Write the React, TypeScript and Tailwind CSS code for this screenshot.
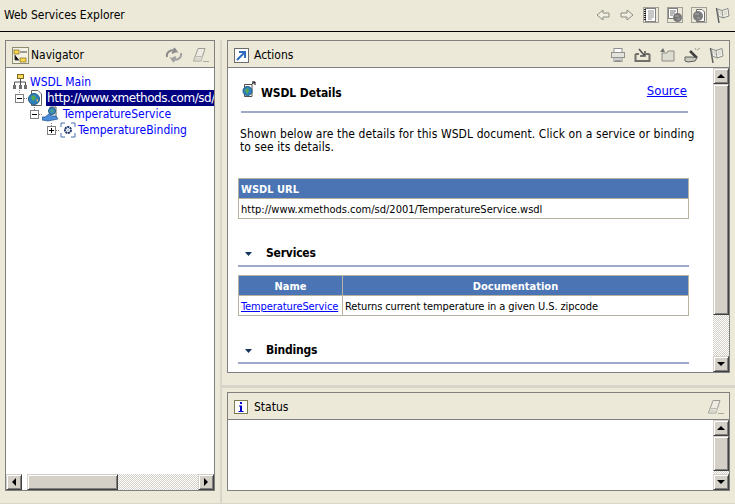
import React from 'react';

const font = "font-['DejaVu_Sans_Condensed','Liberation_Sans',sans-serif]";

function Arrow({ dir }: { dir: 'up' | 'down' | 'left' | 'right' }) {
  const pts = {
    up: '4,10 12,10 8,6',
    down: '4,6 12,6 8,10',
    left: '10,4 10,12 6,8',
    right: '6,4 6,12 10,8',
  }[dir];
  return (
    <svg width="14" height="14" viewBox="1 1 14 14">
      <polygon points={pts} fill="#000" />
    </svg>
  );
}

function ScrollButton({ dir }: { dir: 'up' | 'down' | 'left' | 'right' }) {
  return (
    <div className="w-4 h-4 shrink-0 flex items-center justify-center bg-[#d4d0c8] border border-t-[#d4d0c8] border-l-[#d4d0c8] border-r-[#404040] border-b-[#404040] shadow-[inset_1px_1px_0_#fff,inset_-1px_-1px_0_#808080]">
      <Arrow dir={dir} />
    </div>
  );
}

function Thumb({ className = '' }: { className?: string }) {
  return (
    <div className={`bg-[#d4d0c8] border border-t-[#d4d0c8] border-l-[#d4d0c8] border-r-[#404040] border-b-[#404040] shadow-[inset_1px_1px_0_#fff,inset_-1px_-1px_0_#808080] ${className}`} />
  );
}

const checker = 'bg-[repeating-conic-gradient(#d4d0c8_0_25%,#ffffff_0_50%)] bg-[length:2px_2px]';

function VScroll({ thumb }: { thumb: string }) {
  return (
    <div className="w-4 shrink-0 flex flex-col">
      <ScrollButton dir="up" />
      <Thumb className={`w-4 shrink-0 ${thumb}`} />
      <div className={`flex-1 ${checker}`} />
      <ScrollButton dir="down" />
    </div>
  );
}

function Eraser() {
  return (
    <svg width="18" height="16" viewBox="0 0 18 16">
      <path d="M7 1.5 H14 L10 14 H2.5 Z" fill="#eeece2" stroke="#9c9c94" />
      <path d="M4 9.5 H12" stroke="#bcbcb4" />
      <path d="M4 10.5 H11.5 L10 13.5 H3.5 Z" fill="#d8d8cc" />
      <path d="M12 14.5 H18" stroke="#a8a8a0" />
    </svg>
  );
}

function Refresh() {
  return (
    <svg width="18" height="16" viewBox="0 0 18 16" fill="none">
      <path d="M2 10 C1 5 6 2 11 4 L9 1 M11 4 L7 6" stroke="#8c8c8c" strokeWidth="2" />
      <path d="M16 6 C17 11 12 14 7 12 L9 15 M7 12 L11 10" stroke="#a0a0a0" strokeWidth="2" />
    </svg>
  );
}

function Flag() {
  return (
    <svg width="15" height="17" viewBox="0 0 15 17">
      <path d="M1.5 1 L4 16" stroke="#606060" strokeWidth="1.5" />
      <path d="M2.5 2 L7 3.5 L13 1.5 L14 9 L8 11 L3.5 9 Z" fill="#f0f0e8" stroke="#8c8c8c" />
      <path d="M7 3.5 L8 11" stroke="#909088" />
      <path d="M4 5H6M9 5H12M5 7H7M9 7H12" stroke="#c8c8bc" />
    </svg>
  );
}

function ToolDoc() {
  return (
    <svg width="16" height="16" viewBox="0 0 16 16">
      <rect x="0.5" y="0.5" width="15" height="15" fill="#ece9d8" stroke="#a0a098" />
      <rect x="2.5" y="1.5" width="10" height="13" fill="#fff" stroke="#808080" />
      <path d="M5 4H11M5 6H11M5 8H11M5 10H11M5 12H9" stroke="#909090" />
      <path d="M2 2V14" stroke="#202020" strokeDasharray="1 1" strokeWidth="2" />
    </svg>
  );
}

function ToolDocGlobe() {
  return (
    <svg width="16" height="16" viewBox="0 0 16 16">
      <rect x="0.5" y="0.5" width="15" height="15" fill="#ece9d8" stroke="#a0a098" />
      <rect x="1.5" y="1.5" width="9" height="10" fill="#fff" stroke="#808080" />
      <path d="M3 4H9M3 6H8M3 8H6" stroke="#707070" />
      <circle cx="10.5" cy="10.5" r="4.5" fill="#787878" />
      <path d="M8 9H12M10 12H13" stroke="#a8a8a8" />
    </svg>
  );
}

function ToolGlobeDoc() {
  return (
    <svg width="16" height="16" viewBox="0 0 16 16">
      <rect x="0.5" y="0.5" width="15" height="15" fill="#ece9d8" stroke="#a0a098" />
      <path d="M5.5 2.5 H11 L13.5 5 V14.5 H5.5 Z" fill="#fff" stroke="#707070" />
      <circle cx="7" cy="9" r="5" fill="#7c7c7c" />
      <path d="M4 7H8M6 11H9" stroke="#a8a8a8" />
    </svg>
  );
}

function WsdlIcon() {
  return (
    <svg width="15" height="16" viewBox="0 0 15 16" className="shrink-0">
      <path d="M3.5 0.5 H10 L13.5 4 V15.5 H3.5 Z" fill="#fff" stroke="#606060" />
      <circle cx="6" cy="9" r="5.5" fill="#2f82c0" stroke="#205c80" />
      <path d="M3 7 L6 5 L8 8 L5 11 Z" fill="#58a848" />
      <path d="M8 10 L10 9 L10 12 Z" fill="#e0b040" />
    </svg>
  );
}

function Expander({ open, stem = 4 }: { open: boolean; stem?: number }) {
  return (
    <svg width="9" height="9" viewBox="0 0 9 9" className="shrink-0 overflow-visible">
      <path d={`M4.5 ${-stem} V0 M9 4.5 H13`} stroke="#808080" strokeDasharray="1 1" />
      <rect x="0.5" y="0.5" width="8" height="8" fill="#fff" stroke="#808080" />
      <path d="M2 4.5H7" stroke="#000" />
      {!open && <path d="M4.5 2V7" stroke="#000" />}
    </svg>
  );
}

function TreeRow({ indent, children }: { indent: string; children: React.ReactNode }) {
  return <div className={`h-4 flex items-center ${indent}`}>{children}</div>;
}

function Tree() {
  return (
    <div className="pt-[6px] text-[12px] leading-4 text-[#0000ff] whitespace-nowrap">
      <TreeRow indent="pl-[6px]">
        <svg width="16" height="16" viewBox="0 0 16 16" className="shrink-0">
          <rect x="5.5" y="0.5" width="6" height="4" fill="#f8dc60" stroke="#806820" />
          <path d="M8.5 5V8M2.5 8H13.5M2.5 8V11M8.5 8V11M13.5 8V11" stroke="#505050" />
          <rect x="1" y="11" width="3" height="4" fill="#707070" />
          <rect x="7" y="11" width="3" height="4" fill="#707070" />
          <rect x="12" y="11" width="3" height="4" fill="#707070" />
        </svg>
        <span className="ml-[2px]">WSDL Main</span>
      </TreeRow>
      <TreeRow indent="pl-[9px]">
        <Expander open />
        <span className="ml-[4px]">
          <WsdlIcon />
        </span>
        <span className="ml-[3px] min-w-0 flex-1 bg-[#000080] text-white h-4 overflow-hidden pl-px font-['DejaVu_Sans',sans-serif] tracking-[-0.45px]">
          http://www.xmethods.com/sd/2001/TemperatureService.wsdl
        </span>
      </TreeRow>
      <TreeRow indent="pl-[24px]">
        <Expander open stem={3} />
        <svg width="18" height="16" viewBox="0 0 18 16" className="ml-[3px] shrink-0">
          <path d="M8 1 H14 V12 H8 Z" fill="#fff" stroke="#606060" />
          <circle cx="10" cy="5" r="3.5" fill="#3c8cc0" stroke="#205c80" />
          <path d="M9 4 L11 4 L10 7 Z" fill="#58a848" />
          <path d="M0 11 H3 L7 8 L10 10 L14 10 L16 13 L6 15 L0 14 Z" fill="#4c8cd8" stroke="#20508c" strokeWidth="0.7" />
        </svg>
        <span className="ml-[3px]">TemperatureService</span>
      </TreeRow>
      <TreeRow indent="pl-[41px]">
        <Expander open={false} stem={3} />
        <svg width="16" height="16" viewBox="0 0 16 16" className="ml-[4px] shrink-0" fill="none">
          <path d="M1 5V1H5M11 1H15V5M15 11V15H11M5 15H1V11" stroke="#4470b0" />
          <circle cx="8" cy="8" r="3" stroke="#20386c" strokeWidth="2" strokeDasharray="2 0.6" />
          <circle cx="8" cy="8" r="1" fill="#b0c0e0" />
        </svg>
        <span className="ml-[2px]">TemperatureBinding</span>
      </TreeRow>
    </div>
  );
}

function PanelHeader({ icon, title, tools }: { icon: React.ReactNode; title: string; tools?: React.ReactNode }) {
  return (
    <div className="h-[27px] shrink-0 flex items-center pl-[6px] pr-[5px] pt-[2px] border-b border-[#808080]">
      {icon}
      <span className="text-[12px] text-black">{title}</span>
      <div className="ml-auto flex items-center">{tools}</div>
    </div>
  );
}

function SectionHead({ title }: { title: string }) {
  return (
    <div className="-ml-[2px] w-[451px]">
      <div className="h-[19px] flex items-center pl-[6px]">
        <svg width="9" height="5" viewBox="0 0 9 5" className="shrink-0 mt-[3px]">
          <polygon points="1,0 8,0 4.5,4" fill="#14335c" />
        </svg>
        <span className="ml-[13px] mt-[2px] text-[12px] font-bold tracking-[-0.2px] text-black">{title}</span>
      </div>
      <div className="mt-[3px] h-0.5 bg-[#9fa8c9]" />
    </div>
  );
}

const cellLine = 'border-[#b8b2a0]';

export default function App() {
  return (
    <div className={`w-[735px] h-[504px] bg-[#ece9d8] flex flex-col overflow-hidden ${font}`}>
      <div className="h-[32px] shrink-0 flex items-center border-b border-black pl-1 pr-[5px] pb-[1px]">
        <span className="text-[12px] text-black">Web Services Explorer</span>
        <div className="ml-auto flex items-center gap-2">
          <svg width="14" height="12" viewBox="0 0 14 12" className="mr-[2px]">
            <path d="M1 6 L7 1 V4 H13 V8 H7 V11 Z" fill="#f0eee0" stroke="#8c8c84" />
          </svg>
          <svg width="14" height="12" viewBox="0 0 14 12" className="mr-[1px]">
            <path d="M13 6 L7 1 V4 H1 V8 H7 V11 Z" fill="#f0eee0" stroke="#8c8c84" />
          </svg>
          <ToolDoc />
          <ToolDocGlobe />
          <ToolGlobeDoc />
          <Flag />
        </div>
      </div>

      <div className="flex-1 min-h-0 flex pt-2 pb-[12px] pl-[5px] pr-[5px]">
        <div className="w-[210px] shrink-0 flex flex-col border border-[#808080]">
          <PanelHeader
            icon={
              <svg width="17" height="17" viewBox="0 0 17 17" className="mr-[2px]">
                <rect x="0.5" y="0.5" width="16" height="16" fill="#f4f2e4" stroke="#8c8c70" />
                <rect x="2" y="3" width="5" height="4" fill="#f8d850" stroke="#806820" strokeWidth="0.7" />
                <rect x="8" y="11" width="6" height="4" fill="#f8d850" stroke="#806820" strokeWidth="0.7" />
                <path d="M8 5H15M3 8V13H7" stroke="#404040" />
              </svg>
            }
            title="Navigator"
            tools={
              <div className="flex items-center gap-2">
                <Refresh />
                <Eraser />
              </div>
            }
          />
          <div className="flex-1 min-h-0 bg-white flex flex-col">
            <div className="flex-1 min-h-0 overflow-hidden">
              <Tree />
            </div>
            <div className="h-4 flex shrink-0">
              <ScrollButton dir="left" />
              <Thumb className="w-[91px] h-4 ml-[5px]" />
              <div className={`flex-1 ${checker}`} />
              <ScrollButton dir="right" />
            </div>
          </div>
        </div>

        <div className="w-[12px] shrink-0 pl-[5px]">
          <div className="w-[2px] h-[calc(100%+12px)] bg-[#d8d5ca]" />
        </div>

        <div className="flex-1 min-w-0 flex flex-col">
          <div className="h-[333px] shrink-0 flex flex-col border border-[#808080]">
            <PanelHeader
              icon={
                <svg width="15" height="15" viewBox="0 0 15 15" className="mr-[5px]">
                  <rect x="0.5" y="0.5" width="14" height="14" fill="#fff" stroke="#6c6c6c" />
                  <path d="M3 12 L10 5 M5 4 H11 V10" stroke="#2f6cc0" strokeWidth="2" fill="none" />
                </svg>
              }
              title="Actions"
              tools={
                <div className="flex items-center gap-2">
                  <svg width="16" height="16" viewBox="0 0 16 16">
                    <rect x="4" y="1.5" width="8" height="4" fill="#fff" stroke="#909090" />
                    <rect x="1.5" y="5.5" width="13" height="5" fill="#e4e4dc" stroke="#909090" />
                    <rect x="4" y="10.5" width="8" height="4" fill="#fff" stroke="#909090" />
                    <path d="M5 12H11M5 13.5H11" stroke="#a0a0a0" />
                  </svg>
                  <svg width="17" height="16" viewBox="0 0 17 16" fill="none">
                    <path d="M1.5 7 V14 H15.5 V7 M1.5 7H5 M12 7H15.5" stroke="#707068" strokeWidth="2" />
                    <path d="M5 2 L10 8 M11 4 V9 H6" stroke="#505050" strokeWidth="1.5" />
                  </svg>
                  <svg width="17" height="16" viewBox="0 0 17 16">
                    <polygon points="1,5 4,1 6,5" fill="#707070" />
                    <path d="M3 6 H8 L9 4 H15 V14 H3 Z" fill="#dcdcd0" stroke="#8c8c84" />
                  </svg>
                  <svg width="17" height="16" viewBox="0 0 17 16">
                    <path d="M6 4 L13 11" stroke="#404040" strokeWidth="2.5" />
                    <path d="M13 3 L16 1 M11 1 L12 3" stroke="#a0a098" />
                    <path d="M1 10 H8 L13 11 L11 14 L4 15 L1 14 Z" fill="#c8c8bc" stroke="#606060" />
                  </svg>
                  <Flag />
                </div>
              }
            />
            <div className="flex-1 min-h-0 flex bg-white">
              <div className="flex-1 min-w-0 overflow-hidden pl-[12px] text-[11px] leading-[13px] text-black">
                <div className="flex items-center h-6 mt-[12px] pl-[2px] w-[449px]">
                  <svg width="15" height="17" viewBox="0 0 15 17" className="shrink-0 -mt-[5px]">
                    <path d="M2.5 3.5 H10 V15.5 H2.5 Z" fill="#fff" stroke="#505050" />
                    <circle cx="5.5" cy="10" r="4.5" fill="#2f82c0" stroke="#205c80" />
                    <path d="M3 9 L6 7 L7 10 L5 13 Z" fill="#58a848" />
                    <path d="M10 3 L13 1 M13 1 V4 M13 1 H10" stroke="#000" />
                  </svg>
                  <span className="ml-[4px] mt-[2px] text-[12px] font-bold tracking-[-0.1px]">WSDL Details</span>
                  <a className="ml-auto mr-[2px] -mt-[3px] text-[13px] text-[#0000ff] underline">Source</a>
                </div>
                <div className="mt-[7px] ml-px h-0.5 bg-[#9fa8c9] w-[447px]" />
                <p className="mt-[15px] w-[462px] text-[12px] tracking-[0.09px]">
                  Shown below are the details for this WSDL document. Click on a service or binding to see its details.
                </p>
                <div className={`mt-[24px] -ml-[2px] w-[451px] border ${cellLine}`}>
                  <div className={`h-[20px] pt-px bg-[#4a74b4] border-b ${cellLine} flex items-center pl-[2px] text-white font-bold`}>
                    WSDL URL
                  </div>
                  <div className="h-[19px] pt-px flex items-center pl-[2px]">
                    http://www.xmethods.com/sd/2001/TemperatureService.wsdl
                  </div>
                </div>
                <div className="mt-[24px]">
                  <SectionHead title="Services" />
                </div>
                <div className={`mt-[8px] -ml-[2px] w-[451px] border ${cellLine} grid grid-cols-[104px_1fr]`}>
                  <div className={`h-[20px] pt-px bg-[#4a74b4] border-b border-r ${cellLine} flex items-center justify-center text-white font-bold`}>
                    Name
                  </div>
                  <div className={`h-[20px] pt-px bg-[#4a74b4] border-b ${cellLine} flex items-center justify-center text-white font-bold`}>
                    Documentation
                  </div>
                  <div className={`h-[19px] pt-px border-r ${cellLine} flex items-center pl-[2px] tracking-[-0.1px] text-[#0000ff] underline`}>
                    TemperatureService
                  </div>
                  <div className="h-[19px] pt-px flex items-center pl-[2px] whitespace-nowrap tracking-[-0.1px]">
                    Returns current temperature in a given U.S. zipcode
                  </div>
                </div>
                <div className="mt-[24px]">
                  <SectionHead title="Bindings" />
                </div>
              </div>
              <VScroll thumb="h-[231px]" />
            </div>
          </div>

          <div className="h-[19px] shrink-0 pt-[12px] -ml-[5px] -mr-[5px]">
            <div className="h-[3px] bg-[#d8d5ca]" />
          </div>

          <div className="flex-1 min-h-0 flex flex-col border border-[#808080]">
            <PanelHeader
              icon={
                <svg width="14" height="14" viewBox="0 0 14 14" className="mr-[6px]">
                  <rect x="0.5" y="0.5" width="13" height="13" fill="#fff" stroke="#7c7c50" />
                  <rect x="6" y="2" width="2" height="2" fill="#0000c8" />
                  <path d="M5 5.5H8V11H9.5V12H4.5V11H6V6.5H5Z" fill="#0000c8" />
                </svg>
              }
              title="Status"
              tools={<Eraser />}
            />
            <div className="flex-1 min-h-0 flex bg-white">
              <div className="flex-1" />
              <VScroll thumb="h-[35px]" />
            </div>
          </div>
        </div>
      </div>
      <div className="h-px shrink-0 bg-[#d8d5ca]" />
    </div>
  );
}
